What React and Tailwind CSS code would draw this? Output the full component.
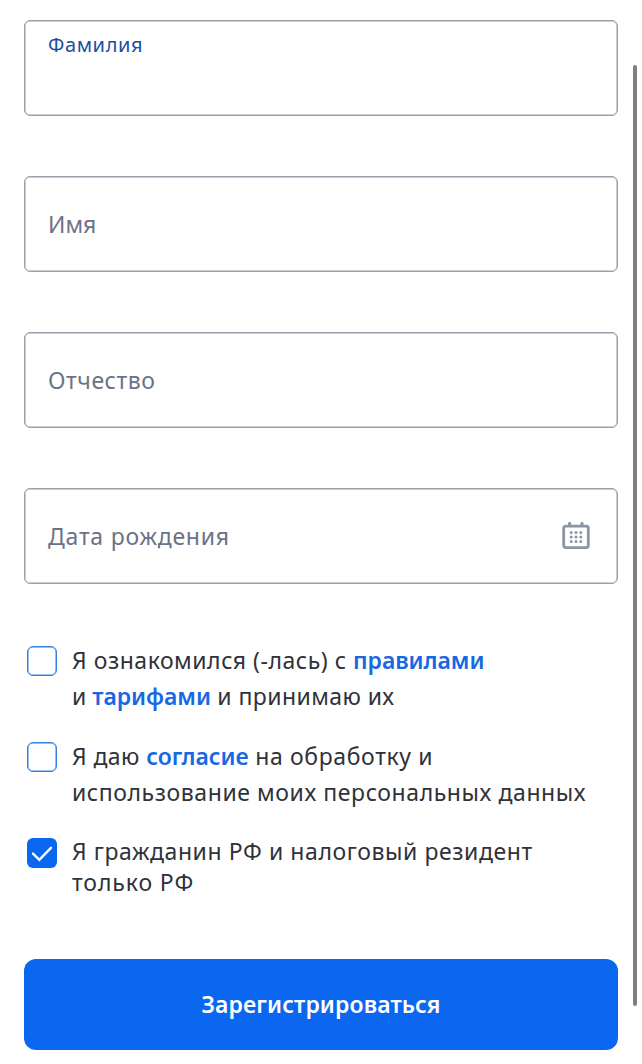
const inputs = [
  { label: 'Фамилия', cls: 'text-[20px] text-[#1b4fa3] tracking-[0.6px] items-start pt-[9px]' },
  { label: 'Имя', cls: 'text-[23px] text-[#6b7287] items-center' },
  { label: 'Отчество', cls: 'text-[23px] text-[#6b7287] tracking-[0.55px] items-center' },
  { label: 'Дата рождения', cls: 'text-[23px] text-[#6b7287] tracking-[0.78px] items-center', calendar: true },
];

function CalendarIcon() {
  return (
    <svg className="mr-1 shrink-0" width="28" height="28" viewBox="0 0 28 28" fill="none" stroke="#8b95a3">
      <rect x="1.7" y="4.2" width="24.6" height="21.4" rx="2" strokeWidth="2.8" />
      <path d="M7.6 3.6V1.4M20 3.6V1.4" strokeWidth="3" strokeLinecap="round" />
      <path d="M9.2 10.4h.01M14 10.4h.01M18.8 10.4h.01M9.2 15h.01M14 15h.01M18.8 15h.01M9.2 19.6h.01M14 19.6h.01M18.8 19.6h.01" strokeWidth="3" strokeLinecap="round" />
    </svg>
  );
}

function Box({ checked }) {
  return (
    <span className={`block h-[30px] w-[30px] shrink-0 rounded-[6px] ${checked ? 'bg-[#0b67ef]' : 'border border-[#3a7de0] bg-white shadow-[inset_0_0_0_0.5px_#3a7de0]'}`}>
      {checked && (
        <svg className="block" width="30" height="30" viewBox="0 0 30 30" fill="none" stroke="white" strokeWidth="2.4" strokeLinecap="round">
          <path d="M6 15.6l6.3 6.2L24 9.8" />
        </svg>
      )}
    </span>
  );
}

function Term({ children }) {
  return <a className="font-semibold tracking-[-0.05px] text-[#1668e3]">{children}</a>;
}

function Consent({ checked, children }) {
  return (
    <label className="flex gap-[15px]">
      <span className="pt-[3px]"><Box checked={checked} /></span>
      <span className={`whitespace-nowrap ${checked ? 'pt-px leading-[31px]' : '-mt-px mb-px'}`}>{children}</span>
    </label>
  );
}

export default function App() {
  return (
    <main className="flex h-[1064px] w-[642px] bg-white font-['Noto_Sans',sans-serif] text-[#2f3238]">
      <div className="ml-6 w-[594px] pt-5">
        <div className="flex flex-col gap-[60px]">
          {inputs.map((f) => (
            <div key={f.label} className={`flex h-24 justify-between rounded-[6px] border border-[#9b9fab] px-[23px] shadow-[inset_0_0_0_0.5px_#9b9fab] ${f.cls}`}>
              <span>{f.label}</span>
              {f.calendar && <CalendarIcon />}
            </div>
          ))}
        </div>
        <div className="ml-[3px] mt-[59px] flex flex-col gap-6 text-[23px] leading-9 tracking-[0.58px]">
          <Consent><span className="tracking-[0.53px]">Я ознакомился (-лась) с </span><Term>правилами</Term><br /><span className="tracking-normal">и </span><Term>тарифами</Term><span className="tracking-[0.42px]"> и принимаю их</span></Consent>
          <Consent><span className="tracking-[0.4px]">Я даю </span><Term>согласие</Term><span className="tracking-[0.63px]"> на обработку и</span><br />использование моих персональных данных</Consent>
          <Consent checked>Я гражданин РФ и налоговый резидент<br /><span className="tracking-[0.9px]">только РФ</span></Consent>
        </div>
        <button className="mt-[61px] h-[91px] w-full rounded-[12px] bg-[#0b67ef] text-[23px] font-semibold tracking-[0.1px] text-white">Зарегистрироваться</button>
      </div>
      <div className="ml-[15px] mt-[65px] h-[941px] w-1 rounded-full bg-[#7f7f7f]" />
    </main>
  );
}
